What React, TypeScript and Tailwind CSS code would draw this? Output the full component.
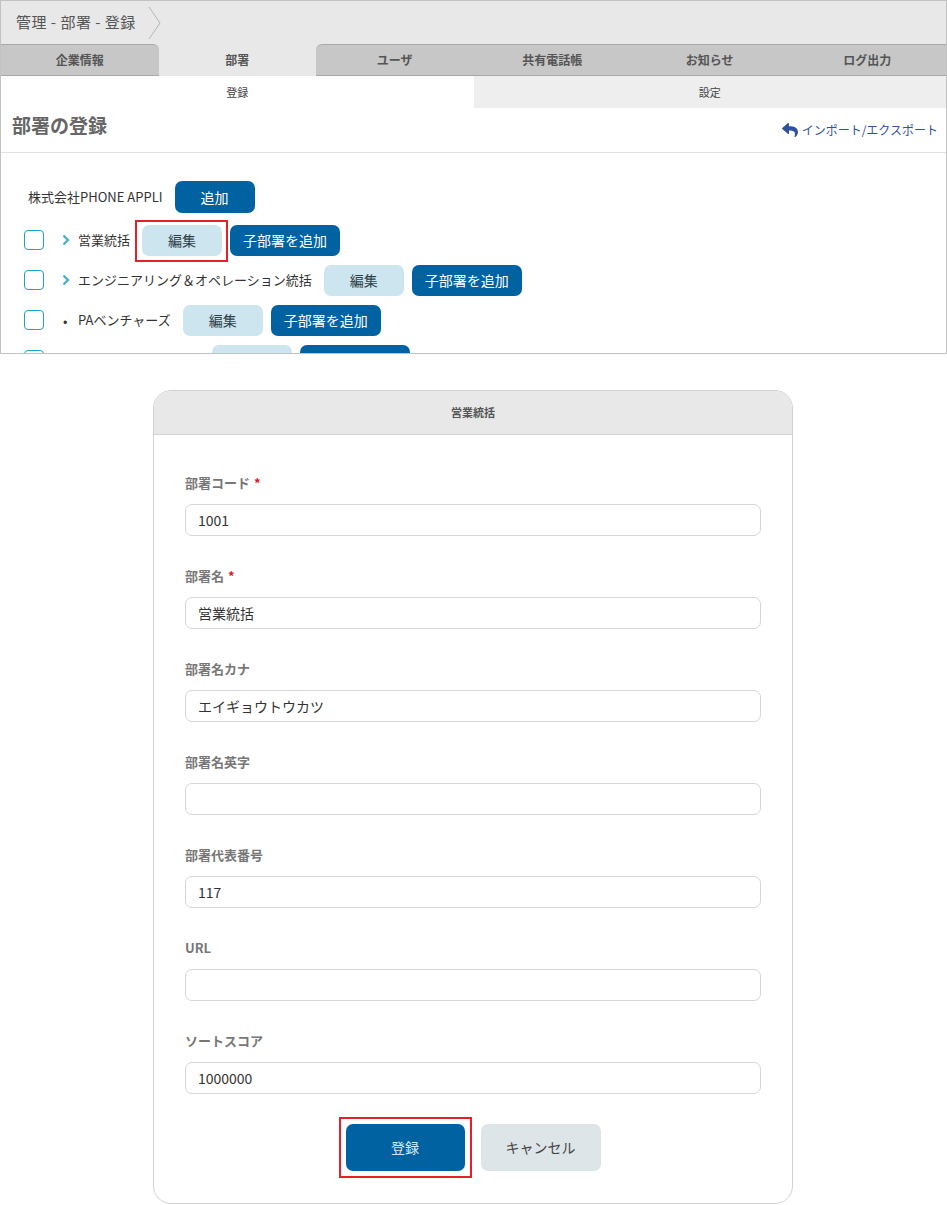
import { FaReply } from "react-icons/fa";

const FONT = { fontFamily: '"Noto Sans CJK JP", "Liberation Sans", sans-serif' };

const tabs = ["企業情報", "部署", "ユーザ", "共有電話帳", "お知らせ", "ログ出力"];
const ACTIVE = 1;

type Dept = { name: string; mark: "chevron" | "bullet"; highlight?: boolean; width?: string };

const depts: Dept[] = [
  { name: "営業統括", mark: "chevron", highlight: true },
  { name: "エンジニアリング＆オペレーション統括", mark: "chevron" },
  { name: "PAベンチャーズ", mark: "bullet" },
  { name: "カスタマーサクセス", mark: "bullet", width: "w-[122px]" },
];

const fields = [
  { label: "部署コード", required: true, value: "1001" },
  { label: "部署名", required: true, value: "営業統括" },
  { label: "部署名カナ", value: "エイギョウトウカツ" },
  { label: "部署名英字", value: "" },
  { label: "部署代表番号", value: "117" },
  { label: "URL", value: "" },
  { label: "ソートスコア", value: "1000000" },
];

function Chevron() {
  return (
    <svg width="8" height="12" viewBox="0 0 8 12" className="shrink-0">
      <path d="M1.5 1.5 L6 6 L1.5 10.5" fill="none" stroke="#46acd2" strokeWidth="2.2" />
    </svg>
  );
}

function DeptRow({ d }: { d: Dept }) {
  return (
    <div className="flex h-[40px] items-center">
      <span className="ml-[23px] h-[20px] w-[20px] shrink-0 rounded-[4px] border-[1.5px] border-[#1f9fc4] bg-white" />
      <span className="ml-[18px] flex w-[16px] items-center">
        {d.mark === "chevron" ? (
          <Chevron />
        ) : (
          <span className="ml-[1px] text-[13px] leading-none text-[#333]">•</span>
        )}
      </span>
      <span className={`text-[13px] text-[#333] ${d.width ?? ""}`}>{d.name}</span>
      <button className="relative ml-[12px] h-[31px] w-[80px] rounded-[7px] bg-[#cde5ee] text-[14px] text-[#2e3e48]">
        編集
        {d.highlight && (
          <span className="absolute -top-[5px] -bottom-[6px] -left-[7px] -right-[6px] border-2 border-[#e5202a]" />
        )}
      </button>
      <button className="ml-[8px] h-[31px] w-[110px] rounded-[7px] bg-[#0062a0] text-[14px] text-white">
        子部署を追加
      </button>
    </div>
  );
}

export default function App() {
  return (
    <div className="w-[947px] bg-white pb-[2px]" style={FONT}>
      {/* captured admin page */}
      <div className="h-[354px] w-[947px] overflow-hidden border border-[#c2c2c2] bg-white">
        <div className="flex h-[43px] items-center bg-[#e8e8e8]">
          <span className="ml-[15px] text-[15px] tracking-[0.5px] text-[#555]">管理 - 部署 - 登録</span>
          <svg width="14" height="38" viewBox="0 0 14 38" className="ml-[12px]">
            <path d="M1 3 L12 19 L1 35" fill="none" stroke="#b5b5b5" strokeWidth="1" />
          </svg>
        </div>

        <div className="flex h-[32px] bg-[#e8e8e8]">
          {tabs.map((t, i) =>
            i === ACTIVE ? (
              <div
                key={t}
                className="flex flex-1 items-center justify-center rounded-[6px] bg-[#e8e8e8] text-[12px] font-bold text-[#555]"
              >
                {t}
              </div>
            ) : (
              <div
                key={t}
                className={`flex flex-1 items-center justify-center border-y border-[#a9a9a9] bg-[#c7c7c7] text-[12px] font-bold text-[#555] ${
                  i === ACTIVE - 1 ? "rounded-tr-[6px]" : ""
                } ${i === ACTIVE + 1 ? "rounded-tl-[6px]" : ""}`}
              >
                {t}
              </div>
            )
          )}
        </div>

        <div className="flex h-[32px]">
          <div className="flex flex-1 items-center justify-center bg-white text-[11px] text-[#444]">登録</div>
          <div className="flex flex-1 items-center justify-center bg-[#eeeeee] text-[11px] text-[#444]">設定</div>
        </div>

        <div className="flex h-[45px] items-start justify-between border-b border-[#e2e2e2]">
          <h1 className="ml-[11px] mt-[3px] text-[19px] font-bold text-[#666]">部署の登録</h1>
          <a className="mr-[8px] mt-[13px] flex items-center gap-[4px] text-[12px] text-[#2f52a0]">
            <FaReply className="h-[16px] w-[16px]" />
            インポート/エクスポート
          </a>
        </div>

        <div className="pt-[28px]">
          <div className="flex h-[32px] items-center">
            <span className="ml-[27px] text-[13px] text-[#333]">株式会社PHONE APPLI</span>
            <button className="ml-[12px] h-[32px] w-[80px] rounded-[7px] bg-[#0062a0] text-[14px] text-white">追加</button>
          </div>
          <div className="mt-[7px]">
            {depts.map((d) => (
              <DeptRow key={d.name} d={d} />
            ))}
          </div>
        </div>
      </div>

      {/* edit dialog */}
      <div className="ml-[153px] mt-[36px] w-[640px] overflow-hidden rounded-[18px] border border-[#d2d2d2] bg-white">
        <div className="flex h-[44px] items-center justify-center border-b border-[#d2d2d2] bg-[#e8e8e8] text-[11px] font-bold text-[#555]">
          営業統括
        </div>
        <div className="px-[31px] pt-[38px] pb-[32px]">
          {fields.map((f) => (
            <div key={f.label} className="mb-[30px] last:mb-0">
              <div className="mb-[11px] flex h-[20px] items-center text-[13px] font-bold text-[#777]">
                {f.label}
                {f.required && <span className="ml-[4px] text-[#d0202a]">*</span>}
              </div>
              <div className="flex h-[32px] items-center rounded-[7px] border border-[#d6d6d6] bg-white px-[12px] text-[14px] text-[#333]">
                {f.value}
              </div>
            </div>
          ))}
          <div className="mt-[27px] flex justify-center gap-[16px]">
            <button className="relative h-[47px] w-[119px] rounded-[7px] bg-[#0062a0] text-[14px] text-[#dbe9f4]">
              登録
              <span className="absolute -inset-[7px] border-2 border-[#e5202a]" />
            </button>
            <button className="h-[47px] w-[120px] rounded-[7px] bg-[#dde5e8] text-[14px] text-[#444]">
              キャンセル
            </button>
          </div>
        </div>
      </div>
    </div>
  );
}
